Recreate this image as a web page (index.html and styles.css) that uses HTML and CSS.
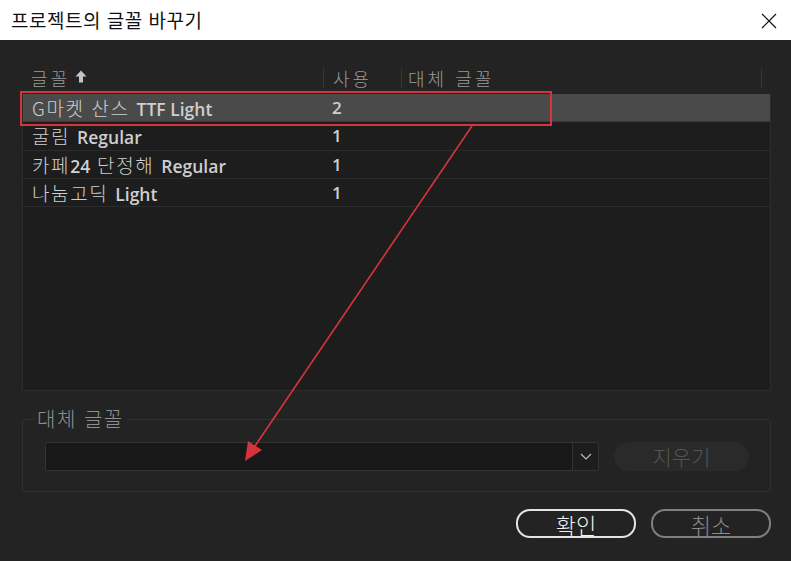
FILE: index.html
```html
<!DOCTYPE html>
<html lang="ko">
<head>
<meta charset="utf-8">
<link rel="stylesheet" href="styles.css">
</head>
<body>
<div class="dialog">
  <div class="titlebar">
    <span class="title">프로젝트의 글꼴 바꾸기</span>
    <svg class="close" width="16" height="16" viewBox="0 0 16 16"><path d="M1 1L15 15M15 1L1 15" stroke="#111" stroke-width="1.2" fill="none"/></svg>
  </div>
  <div class="content">
    <div class="table">
      <div class="thead">
        <div class="th c1">글꼴<svg class="sort" width="12" height="13" viewBox="0 0 12 13"><path d="M6 0.5L11.5 6.5H8V12.5H4V6.5H0.5Z" fill="#c4c4c4"/></svg></div>
        <div class="th c2">사용</div>
        <div class="th c3">대체 글꼴</div>
        <div class="th c4"></div>
      </div>
      <div class="tbody">
        <div class="row sel"><div class="c1">G마켓 산스 <span class="en">TTF Light</span></div><div class="c2">2</div></div>
        <div class="row"><div class="c1">굴림 <span class="en">Regular</span></div><div class="c2">1</div></div>
        <div class="row"><div class="c1">카페<span class="en">24</span> 단정해 <span class="en">Regular</span></div><div class="c2">1</div></div>
        <div class="row"><div class="c1">나눔고딕 <span class="en">Light</span></div><div class="c2">1</div></div>
      </div>
    </div>
    <fieldset class="group">
      <legend>대체 글꼴</legend>
      <div class="combo">
        <div class="field"></div>
        <div class="drop"><svg width="12" height="7" viewBox="0 0 12 7"><path d="M1 1l5 5 5-5" stroke="#bbb" stroke-width="1.2" fill="none"/></svg></div>
      </div>
      <div class="clear">지우기</div>
    </fieldset>
    <div class="buttons">
      <div class="btn ok">확인</div>
      <div class="btn cancel">취소</div>
    </div>
  </div>
  <svg class="annot" width="791" height="561" viewBox="0 0 791 561">
    <rect x="21" y="92" width="530" height="33" fill="none" stroke="#d6343b" stroke-width="2"/>
    <line x1="472" y1="126" x2="255" y2="446" stroke="#d6343b" stroke-width="1.6"/>
    <path d="M245 461L248 441L262 450Z" fill="#d6343b"/>
  </svg>
</div>
</body>
</html>
```
FILE: styles.css
```css
* { box-sizing: border-box; }
html, body { margin: 0; padding: 0; }
body {
  width: 791px;
  height: 561px;
  background: #232323;
  font-family: "Noto Sans CJK KR", "Noto Sans", sans-serif;
  overflow: hidden;
}
.dialog { position: relative; width: 791px; height: 561px; }
.titlebar {
  height: 40px;
  background: #fff;
  display: flex;
  align-items: center;
  justify-content: space-between;
  padding: 0 14px 2px 11px;
}
.title { font-size: 19px; color: #111; font-weight: 400; letter-spacing: 0.5px; }
.close { margin-top: 3px; }
.content { padding: 22px 20px 0 22px; }
.table { height: 329px; display: flex; flex-direction: column; }
.thead { height: 32px; display: flex; align-items: center; }
.th {
  font-size: 18px;
  color: #999;
  font-weight: 300;
  letter-spacing: 3px;
  height: 20px;
  line-height: 20px;
  display: flex;
  align-items: center;
}
.thead .c1 { width: 301px; padding-left: 9px; gap: 5px; }
.thead .c2 { width: 78px; border-left: 1px solid #363636; padding-left: 9px; }
.thead .c3 { width: 360px; border-left: 1px solid #363636; padding-left: 6px; }
.thead .c4 { width: 10px; border-left: 1px solid #363636; }
.sort { margin-top: -3px; }
.tbody {
  flex: 1;
  background: #1d1d1d;
  border: 1px solid #2c2c2c;
  border-top: none;
}
.row {
  height: 28.3px;
  display: flex;
  align-items: center;
  border-bottom: 1px solid #2b2b2b;
  font-size: 19px;
  color: #cfcfcf;
  font-weight: 300;
}
.row.sel { background: #4a4a4a; border-bottom-color: #3a3a3a; }
.row .c1 { width: 301px; padding-left: 9px; white-space: nowrap; letter-spacing: 1.6px; }
.row .c2 { padding-left: 8px; font-family: "Open Sans", sans-serif; font-weight: 600; font-size: 17px; }
.en { font-family: "Open Sans", sans-serif; font-weight: 600; font-size: 17.5px; letter-spacing: 0; }
.group {
  margin: 17px 0 0 0;
  border: 1px solid #303030;
  border-radius: 3px;
  padding: 12px 21px 21px 22px;
  display: flex;
  align-items: center;
  height: 84px;
  min-width: 0;
}
.group legend {
  font-size: 20px;
  color: #8e8e8e;
  font-weight: 300;
  letter-spacing: 1.5px;
  padding: 0 3px 0 3px;
  margin-left: -11px;
  line-height: 22px;
}
.combo {
  width: 554px;
  height: 29px;
  display: flex;
  border: 1px solid #333;
  border-radius: 2px;
  background: #181818;
}
.field { flex: 1; }
.drop {
  width: 26px;
  border-left: 1px solid #333;
  display: flex;
  align-items: center;
  justify-content: center;
  background: #1d1d1d;
}
.clear {
  margin-left: 15px;
  width: 135px;
  height: 29px;
  border-radius: 15px;
  background: #2a2a2a;
  color: #545454;
  font-size: 21px;
  font-weight: 300;
  display: flex;
  align-items: center;
  justify-content: center;
}
.buttons {
  display: flex;
  justify-content: flex-end;
  gap: 15px;
  margin-top: 17px;
}
.btn {
  width: 120px;
  height: 29px;
  border-radius: 14px;
  display: flex;
  align-items: center;
  justify-content: center;
  font-size: 22px;
  font-weight: 300;
  line-height: 1;
}
.ok { border: 2px solid #e4e4e4; color: #f2f2f2; }
.cancel { border: 2px solid #808080; color: #8a8a8a; }
.annot { position: absolute; left: 0; top: 0; pointer-events: none; }
```
